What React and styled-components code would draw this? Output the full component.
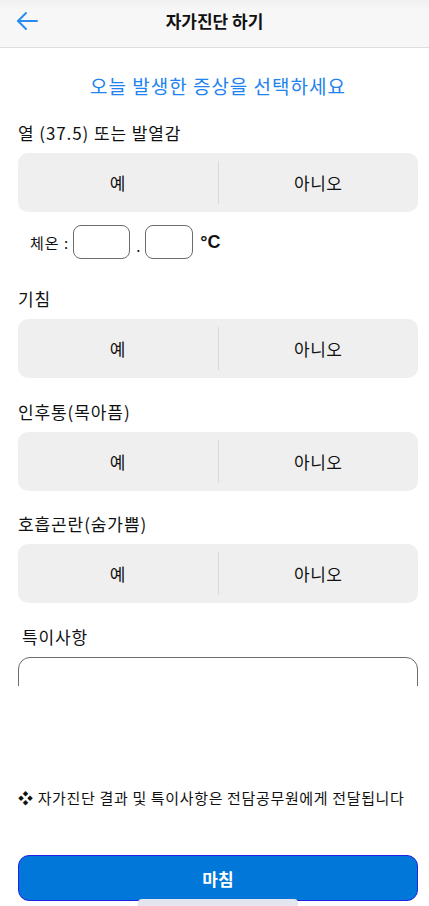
import React, { useState } from 'react';
import styled, { createGlobalStyle } from 'styled-components';

const GlobalStyle = createGlobalStyle`
  html, body {
    margin: 0;
    padding: 0;
    background: #ffffff;
  }
  body {
    font-family: "Noto Sans CJK KR", "Noto Sans", sans-serif;
    color: #111;
  }
  * {
    box-sizing: border-box;
  }
`;

const Screen = styled.div`
  position: relative;
  width: 429px;
  height: 906px;
  display: flex;
  flex-direction: column;
  background: #fff;
  overflow: hidden;
`;

const Header = styled.div`
  height: 48px;
  flex: none;
  display: flex;
  align-items: flex-start;
  justify-content: center;
  position: relative;
  background: linear-gradient(#f0f0f0, #f7f7f7 10px);
  border-bottom: 1px solid #dedede;
`;

const BackButton = styled.button`
  position: absolute;
  left: 15px;
  top: 10px;
  width: 24px;
  height: 21px;
  padding: 0;
  border: none;
  background: none;
  display: flex;
  align-items: center;
  justify-content: center;
`;

const HeaderTitle = styled.h1`
  margin: 0;
  font-size: 17px;
  font-weight: 600;
  line-height: 41px;
  color: #111;
`;

const ScrollArea = styled.div`
  height: 638px;
  flex: none;
  overflow: hidden;
  padding: 0 11px 0 18px;
`;

const Subtitle = styled.p`
  margin: 25px 0 23px;
  text-align: center;
  font-size: 19px;
  letter-spacing: 1px;
  line-height: 26px;
  color: #2183ee;
`;

const Question = styled.section`
  margin-bottom: ${({ $gap }) => $gap}px;
`;

const QuestionLabel = styled.div`
  font-size: 17px;
  letter-spacing: 0.9px;
  line-height: 22px;
  margin: 0 0 9px ${({ $indent }) => $indent || 0}px;
  color: #111;
`;

const Segment = styled.div`
  width: 400px;
  height: 59px;
  display: grid;
  grid-template-columns: 1fr 1px 1fr;
  align-items: center;
  background: #efefef;
  border-radius: 10px;
`;

const SegmentOption = styled.button`
  height: 100%;
  border: none;
  background: ${({ $active }) => ($active ? '#dcdcdc' : 'transparent')};
  font-family: inherit;
  font-size: 17px;
  letter-spacing: 0.5px;
  color: #111;
  padding: 0;
  border-radius: 10px;
`;

const Divider = styled.span`
  width: 1px;
  height: 43px;
  background: #d9d9d9;
`;

const TempRow = styled.div`
  display: flex;
  align-items: center;
  height: 34px;
  margin: 13px 0 29px 12px;
`;

const TempLabel = styled.span`
  font-size: 15px;
  letter-spacing: 1px;
  margin-right: 4px;
`;

const TempInput = styled.input`
  width: ${({ $w }) => $w}px;
  height: 34px;
  border: 1px solid #6b6b6b;
  border-radius: 8px;
  padding: 0 6px;
  font-size: 15px;
  background: #fff;
  outline: none;
`;

const Dot = styled.span`
  font-size: 15px;
  margin: 6px 5px 0 6px;
`;

const Unit = styled.span`
  font-family: "Liberation Sans", Arial, sans-serif;
  font-weight: 700;
  font-size: 18px;
  margin-left: 7px;
`;

const NoteBox = styled.textarea`
  width: 400px;
  height: 120px;
  border: 1px solid #6b6b6b;
  border-radius: 12px;
  resize: none;
  display: block;
  font-family: inherit;
`;

const Footer = styled.div`
  flex: 1;
  display: flex;
  flex-direction: column;
  padding: 0 11px 5px 18px;
`;

const Notice = styled.p`
  margin: 102px 0 0;
  font-size: 15px;
  letter-spacing: 0.65px;
  line-height: 20px;
  color: #111;
  white-space: nowrap;
`;

const DoneButton = styled.button`
  margin-top: auto;
  width: 400px;
  height: 46px;
  border: 1px solid #2121e6;
  border-radius: 11px;
  background: #0077d9;
  color: #fff;
  font-family: inherit;
  font-size: 17px;
  font-weight: 700;
`;

const HomeIndicator = styled.div`
  position: absolute;
  left: 138px;
  bottom: 0;
  width: 160px;
  height: 7px;
  border-radius: 4px 4px 0 0;
  background: #e3e6ee;
`;

const BackArrow = () => (
  <svg width="22" height="20" viewBox="0 0 22 20" fill="none" stroke="#2a8cf2" strokeWidth="2" strokeLinecap="round" strokeLinejoin="round">
    <path d="M21 10H2" />
    <path d="M10 2L2 10l8 8" />
  </svg>
);

const questions = [
  { key: 'fever', label: '열 (37.5) 또는 발열감', temp: true },
  { key: 'cough', label: '기침', gap: 23 },
  { key: 'throat', label: '인후통(목아픔)', gap: 22 },
  { key: 'breath', label: '호흡곤란(숨가쁨)', gap: 23 },
];

const App = () => {
  const [answers, setAnswers] = useState({});

  const pick = (key, value) => setAnswers({ ...answers, [key]: value });

  return (
    <Screen>
      <GlobalStyle />
      <Header>
        <BackButton aria-label="뒤로">
          <BackArrow />
        </BackButton>
        <HeaderTitle>자가진단 하기</HeaderTitle>
      </Header>
      <ScrollArea>
        <Subtitle>오늘 발생한 증상을 선택하세요</Subtitle>
        {questions.map(q => (
          <Question key={q.key} $gap={q.temp ? 0 : q.gap}>
            <QuestionLabel>{q.label}</QuestionLabel>
            <Segment>
              <SegmentOption $active={answers[q.key] === 'yes'} onClick={() => pick(q.key, 'yes')}>예</SegmentOption>
              <Divider />
              <SegmentOption $active={answers[q.key] === 'no'} onClick={() => pick(q.key, 'no')}>아니오</SegmentOption>
            </Segment>
            {q.temp && (
              <TempRow>
                <TempLabel>체온 :</TempLabel>
                <TempInput $w={57} />
                <Dot>.</Dot>
                <TempInput $w={48} />
                <Unit>°C</Unit>
              </TempRow>
            )}
          </Question>
        ))}
        <QuestionLabel $indent={4}>특이사항</QuestionLabel>
        <NoteBox />
      </ScrollArea>
      <Footer>
        <Notice>❖ 자가진단 결과 및 특이사항은 전담공무원에게 전달됩니다</Notice>
        <DoneButton>마침</DoneButton>
      </Footer>
      <HomeIndicator />
    </Screen>
  );
};

export default App;
